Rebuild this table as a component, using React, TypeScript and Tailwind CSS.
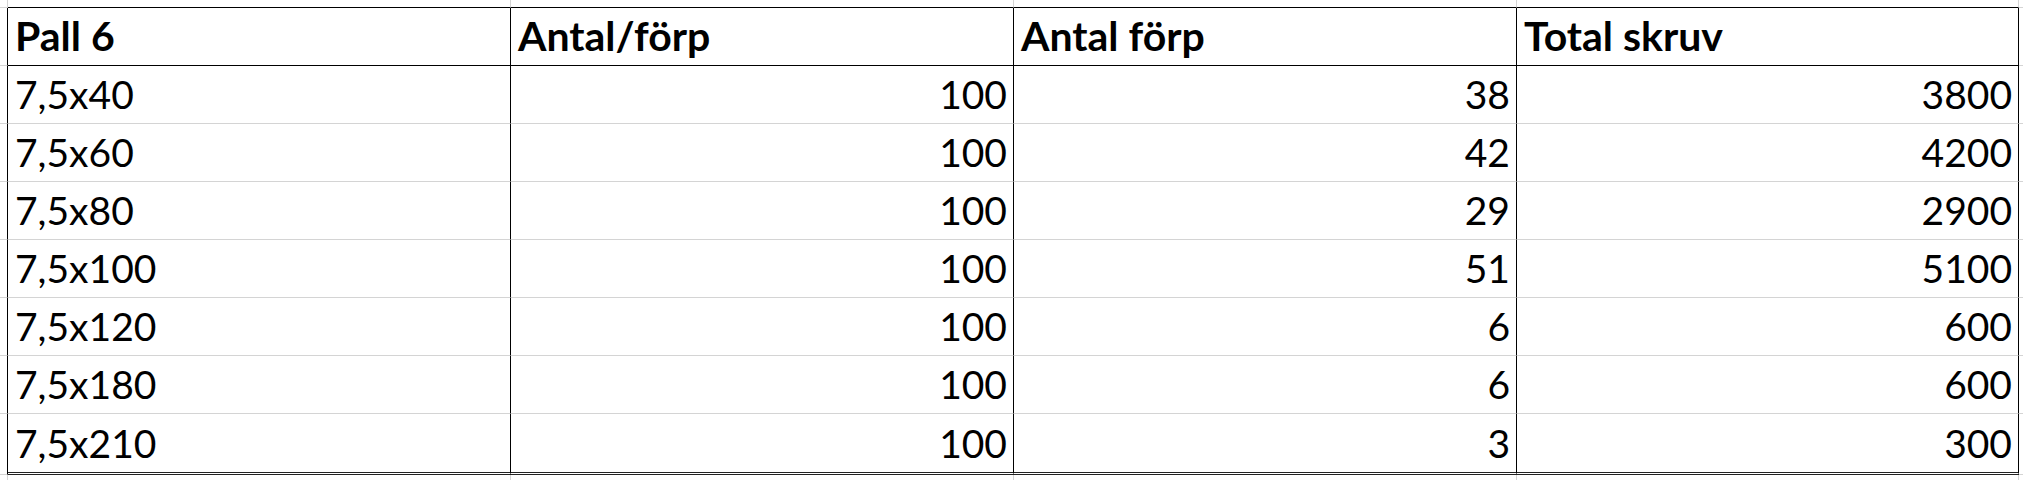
import React from 'react';

// Spreadsheet excerpt: pallet 6 screw inventory

type Row = { size: string; perPack: number; packs: number; total: number };

const rows: Row[] = [
  { size: '7,5x40', perPack: 100, packs: 38, total: 3800 },
  { size: '7,5x60', perPack: 100, packs: 42, total: 4200 },
  { size: '7,5x80', perPack: 100, packs: 29, total: 2900 },
  { size: '7,5x100', perPack: 100, packs: 51, total: 5100 },
  { size: '7,5x120', perPack: 100, packs: 6, total: 600 },
  { size: '7,5x180', perPack: 100, packs: 6, total: 600 },
  { size: '7,5x210', perPack: 100, packs: 3, total: 300 },
];

const headers = ['Pall 6', 'Antal/förp', 'Antal förp', 'Total skruv'];

const font = { fontFamily: 'Lato, "Open Sans", sans-serif' };

const App: React.FC = () => {
  return (
    <div className="w-[2023px] h-[480px] bg-white overflow-hidden text-black" style={font}>
      <div className="grid grid-cols-[8px_503px_503px_503px_502px_1fr] grid-rows-[8px_58px_58px_58px_58px_58px_58px_58px_61px_1fr] h-full">
        {/* top strip outside the table */}
        <div className="border-r border-b border-[#d4d4d4]" />
        {headers.map((h) => (
          <div key={`top-${h}`} className="border-r border-r-[#d4d4d4] border-b border-b-black" />
        ))}
        <div className="border-b border-[#d4d4d4]" />

        {/* header row */}
        <div className="border-r border-r-black border-b border-b-[#d4d4d4]" />
        {headers.map((h) => (
          <div
            key={h}
            className="flex items-end border-r border-r-black border-b border-b-black pl-[7px] pb-[9px] text-[41px] leading-none font-bold"
          >
            {h}
          </div>
        ))}
        <div className="border-b border-[#d4d4d4]" />

        {/* data rows */}
        {rows.map((r, i) => {
          const last = i === rows.length - 1;
          const bottom = last
            ? 'border-b-[3px] border-double border-b-[#222]'
            : 'border-b border-b-[#d4d4d4]';
          const cell = `flex items-end border-r border-r-black ${bottom} pb-[9px] text-[39px] leading-none`;
          return (
            <React.Fragment key={r.size}>
              <div className="border-r border-r-black border-b border-b-[#d4d4d4]" />
              <div className={`${cell} pl-[7px]`}>{r.size}</div>
              <div className={`${cell} justify-end pr-[6px]`}>{r.perPack}</div>
              <div className={`${cell} justify-end pr-[6px]`}>{r.packs}</div>
              <div className={`${cell} justify-end pr-[6px]`}>{r.total}</div>
              <div className="border-b border-[#d4d4d4]" />
            </React.Fragment>
          );
        })}

        {/* strip below the table */}
        <div className="border-r border-[#d4d4d4]" />
        {headers.map((h) => (
          <div key={`bot-${h}`} className="border-r border-[#d4d4d4]" />
        ))}
        <div />
      </div>
    </div>
  );
};

export default App;
